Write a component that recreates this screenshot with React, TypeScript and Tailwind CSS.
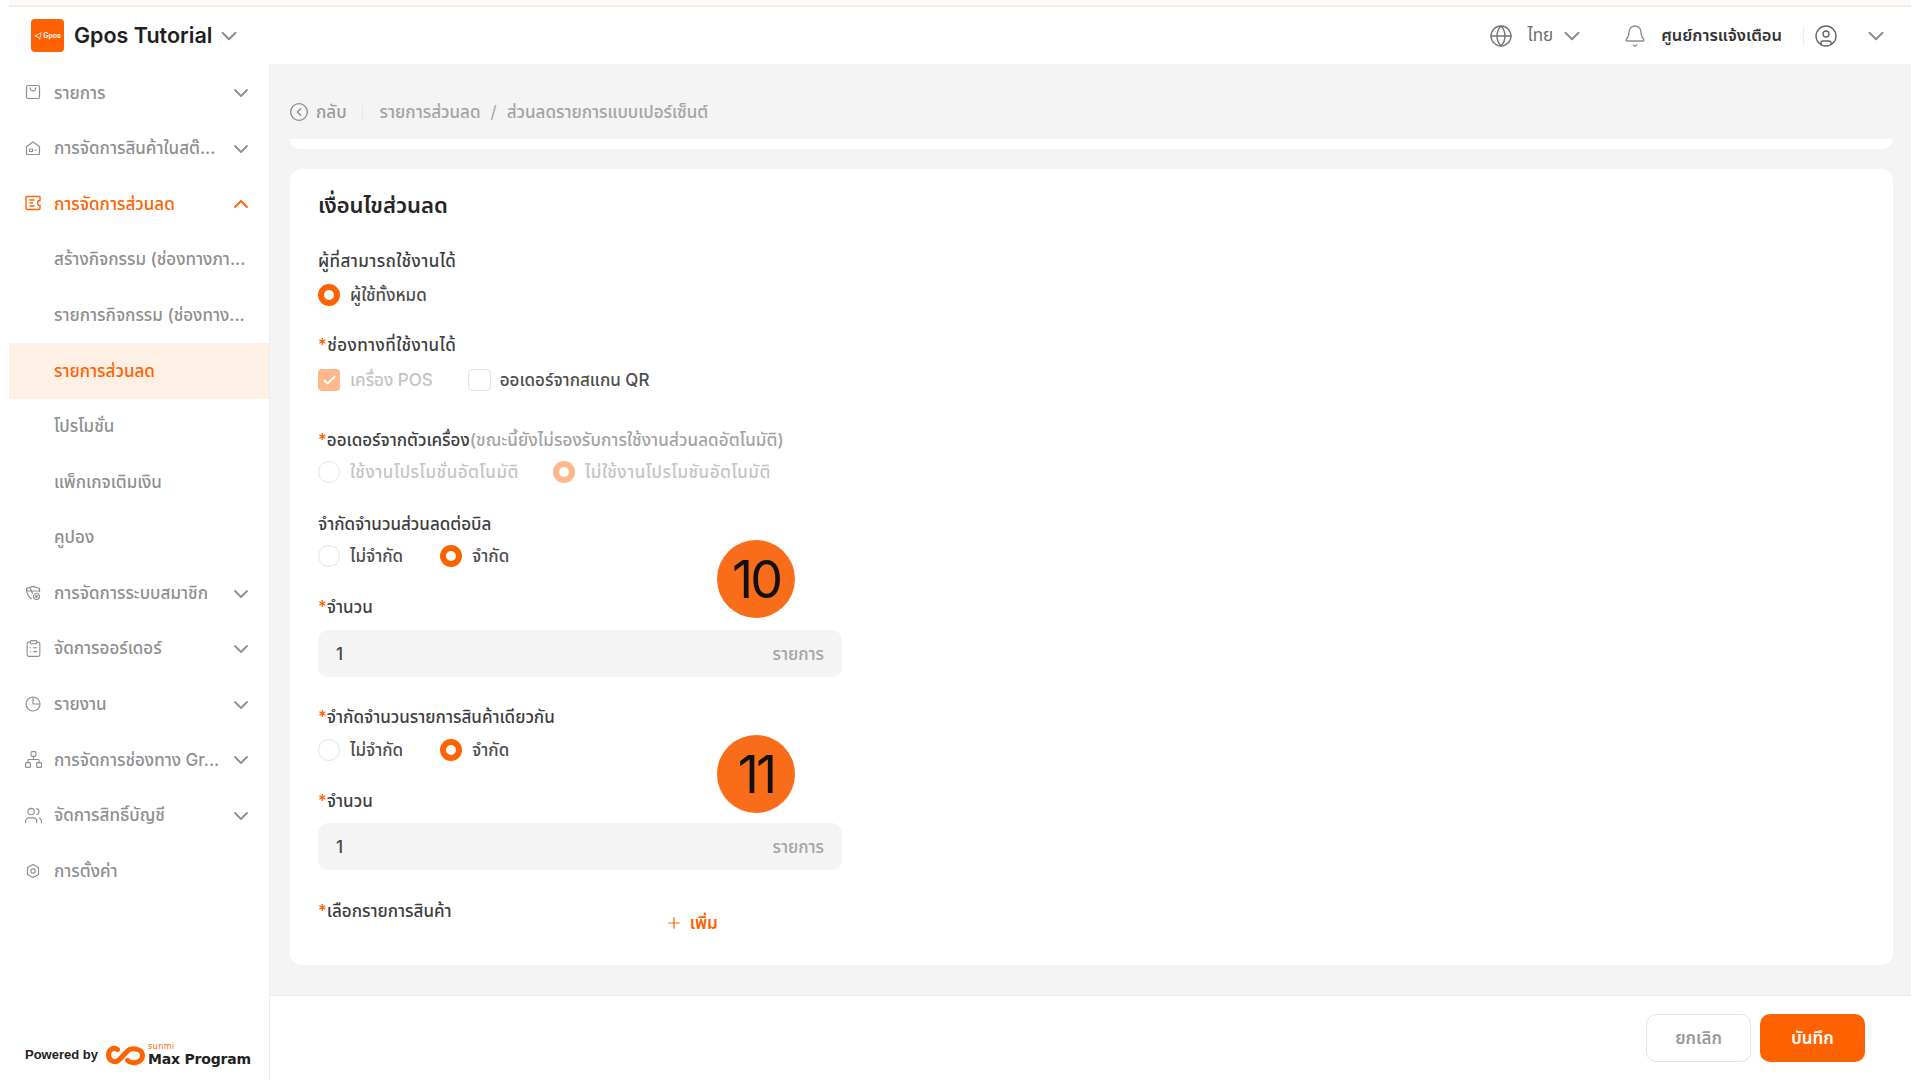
import { Bell, Check, ChevronDown, ChevronUp, CircleChevronLeft, CircleUser, ClipboardList, Globe, Network, Plus, Users } from 'lucide-react';
import type { ReactNode } from 'react';

const ORANGE = '#ff6200';

const iconClass = 'w-[16px] h-[16px] shrink-0 -mt-[2px]';
const lucideIconClass = 'w-[19px] h-[19px] shrink-0 -mx-[1.5px] -mt-[2px]';

function BagIcon() {
  return (
    <svg viewBox="0 0 16 16" fill="none" stroke="currentColor" strokeWidth="1.2" className={iconClass}>
      <rect x="1.5" y="1.5" width="13" height="13" rx="1.5" />
      <path d="M5 3.5c.4 2.4 1.5 3.4 3 3.4s2.6-1 3-3.4" />
    </svg>
  );
}

function StoreIcon() {
  return (
    <svg viewBox="0 0 16 16" fill="none" stroke="currentColor" strokeWidth="1.2" className={iconClass}>
      <path d="M1.5 6.5 8 2l6.5 4.5v7a1 1 0 0 1-1 1h-11a1 1 0 0 1-1-1z" />
      <path d="M4.5 9h3v2.5h-3zM9.5 10h2" />
    </svg>
  );
}

function TicketIcon() {
  return (
    <svg viewBox="0 0 16 16" fill="none" stroke="currentColor" strokeWidth="1.4" className={iconClass}>
      <path d="M2 1.5h12a1 1 0 0 1 1 1v3a2.5 2.5 0 0 0 0 5v3a1 1 0 0 1-1 1H2a1 1 0 0 1-1-1v-11a1 1 0 0 1 1-1z" />
      <path d="M4.5 5h5M4.5 8h3.500M4.500 11h5" />
    </svg>
  );
}

function MemberIcon() {
  return (
    <svg viewBox="0 0 16 16" fill="none" stroke="currentColor" strokeWidth="1.2" className={iconClass}>
      <path d="M7 14C3.500 12 1.500 9 1.500 3.500L8 1.500l6.500 2V7" />
      <path d="M1.800 6h12M5 2.500 6.500 6l1 3" />
      <circle cx="11.500" cy="11.500" r="3" />
      <circle cx="11.500" cy="11.500" r="0.800" />
    </svg>
  );
}

function ReportIcon() {
  return (
    <svg viewBox="0 0 16 16" fill="none" stroke="currentColor" strokeWidth="1.2" className={iconClass}>
      <circle cx="8" cy="8" r="7" />
      <path d="M8 1v7h7" />
    </svg>
  );
}

function SettingIcon() {
  return (
    <svg viewBox="0 0 16 16" fill="none" stroke="currentColor" strokeWidth="1.2" className={iconClass}>
      <path d="M8 1.500 13.500 4.500v7L8 14.500l-5.500-3v-7z" />
      <circle cx="8" cy="8" r="2.200" />
    </svg>
  );
}

const menu: { label: string; icon: ReactNode; open?: boolean; active?: boolean; chevron?: boolean }[] = [
  { label: 'รายการ', icon: <BagIcon />, chevron: true },
  { label: 'การจัดการสินค้าในสต๊...', icon: <StoreIcon />, chevron: true },
  { label: 'การจัดการส่วนลด', icon: <TicketIcon />, chevron: true, open: true },
];

const subMenu = [
  { label: 'สร้างกิจกรรม (ช่องทางภา...' },
  { label: 'รายการกิจกรรม (ช่องทาง...' },
  { label: 'รายการส่วนลด', active: true },
  { label: 'โปรโมชั่น' },
  { label: 'แพ็กเกจเติมเงิน' },
  { label: 'คูปอง' },
];

const menuBottom: { label: string; icon: ReactNode; chevron?: boolean }[] = [
  { label: 'การจัดการระบบสมาชิก', icon: <MemberIcon />, chevron: true },
  { label: 'จัดการออร์เดอร์', icon: <ClipboardList className={lucideIconClass} strokeWidth={1.4} />, chevron: true },
  { label: 'รายงาน', icon: <ReportIcon />, chevron: true },
  { label: 'การจัดการช่องทาง Gr...', icon: <Network className={lucideIconClass} strokeWidth={1.4} />, chevron: true },
  { label: 'จัดการสิทธิ์บัญชี', icon: <Users className={lucideIconClass} strokeWidth={1.4} />, chevron: true },
  { label: 'การตั้งค่า', icon: <SettingIcon /> },
];

function MenuRow({ label, icon, open, chevron }: { label: string; icon: ReactNode; open?: boolean; chevron?: boolean }) {
  return (
    <div className={`h-[55.6px] flex items-center pl-[16px] pr-[16px] text-[17px] font-medium ${open ? 'text-[#ff6200]' : 'text-[#8f8f8f]'}`}>
      {icon}
      <span className="ml-[13px] flex-1 whitespace-nowrap">{label}</span>
      {chevron && (open ? <ChevronUp className="w-[24px] h-[24px]" strokeWidth={1.8} /> : <ChevronDown className="w-[24px] h-[24px]" strokeWidth={1.8} />)}
    </div>
  );
}

function Sidebar() {
  return (
    <aside className="w-[261px] shrink-0 bg-white border-r border-[#eeeeee] flex flex-col">
      <div className="h-[1.5px]" />
      {menu.map((item) => (
        <MenuRow key={item.label} {...item} />
      ))}
      {subMenu.map((item) => (
        <div
          key={item.label}
          className={`h-[55.6px] flex items-center pl-[45px] text-[17px] font-medium whitespace-nowrap ${
            item.active ? 'bg-[#fff0e6] text-[#ff6200]' : 'text-[#8f8f8f]'
          }`}
        >
          {item.label}
        </div>
      ))}
      {menuBottom.map((item) => (
        <MenuRow key={item.label} {...item} />
      ))}
      <div className="mt-auto h-[52px] flex items-center pl-[16px] pt-[1px]">
        <span className="text-[13px] font-bold text-[#222222] font-['Liberation_Sans',sans-serif]">Powered by</span>
        <svg viewBox="0 0 40 26" className="w-[41px] h-[26px] ml-[7px]" fill="none" stroke={ORANGE} strokeWidth="5">
          <path d="M12 7.500C8.500 5 3 7 3 13c0 6 6.500 8.500 10.500 5L22 9c3.500-3.500 15-3 15 4.500S26 22.500 22 18.500" strokeLinecap="round" />
        </svg>
        <div className="flex flex-col ml-[2px] font-['DejaVu_Sans',sans-serif] leading-none">
          <span className="text-[8px] text-[#ff6200] tracking-[0.5px] h-[9px]">sunmi</span>
          <span className="text-[14px] font-bold text-[#222222] tracking-[-0.2px]">Max Program</span>
        </div>
      </div>
    </aside>
  );
}

function Header() {
  return (
    <header className="h-[57px] shrink-0 bg-white flex items-center pl-[22px] text-[#8c8c8c]">
      <div className="w-[33px] h-[33px] rounded-[4px] bg-[#ff6200] flex items-center justify-center">
        <svg viewBox="0 0 10 10" className="w-[8px] h-[8px] mr-[1px]" fill="none" stroke="#ffffff" strokeWidth="1">
          <path d="M1 5 9 1 7 9 5 6z" />
        </svg>
        <span className="text-[7px] font-semibold text-white leading-none">Gpos</span>
      </div>
      <span className="ml-[10px] text-[21.500px] font-semibold text-[#1f1f1f]">Gpos Tutorial</span>
      <ChevronDown className="ml-[4px] w-[26px] h-[26px]" strokeWidth={1.8} />
      <div className="flex-1" />
      <Globe className="w-[24px] h-[24px] text-[#757575]" strokeWidth={1.4} />
      <span className="ml-[15px] text-[17px] text-[#6b6b6b]">ไทย</span>
      <ChevronDown className="ml-[6px] w-[26px] h-[26px]" strokeWidth={1.8} />
      <Bell className="ml-[38px] w-[24px] h-[24px] text-[#8c8c8c]" strokeWidth={1.3} />
      <span className="ml-[14px] text-[16.500px] font-semibold text-[#333333]">ศูนย์การแจ้งเตือน</span>
      <div className="ml-[21px] w-px h-[20px] bg-[#eeeeee]" />
      <CircleUser className="ml-[10px] w-[24px] h-[24px] text-[#666666]" strokeWidth={1.4} />
      <ChevronDown className="ml-[25px] mr-[22px] w-[26px] h-[26px]" strokeWidth={1.8} />
    </header>
  );
}

function Radio({ checked, disabled, label }: { checked?: boolean; disabled?: boolean; label: string }) {
  let ring = 'border border-[#e3e3e3] bg-white';
  if (checked) ring = disabled ? 'border-[6px] border-[#ffb78c] bg-white' : 'border-[6px] border-[#ff6200] bg-white';
  return (
    <div className="flex items-center">
      <span className={`w-[22px] h-[22px] rounded-full ${ring}`} />
      <span className={`ml-[10px] pt-[2px] text-[17px] font-medium whitespace-nowrap ${disabled ? 'text-[#c4c4c4] tracking-[0.5px]' : 'text-[#4d4d4d]'}`}>{label}</span>
    </div>
  );
}

function Label({ required, wide, children }: { required?: boolean; wide?: boolean; children: ReactNode }) {
  return (
    <div className={`h-[24px] pt-[2px] flex items-center text-[17px] font-medium text-[#3d3d3d] whitespace-nowrap ${wide ? 'tracking-[0.4px]' : ''}`}>
      {required && <span className="text-[#ff6200]">*</span>}
      {children}
    </div>
  );
}

function QtyInput() {
  return (
    <div className="w-[524px] h-[47px] rounded-[10px] bg-[#f4f4f4] flex items-center justify-between px-[18px] pt-[2px] text-[17px] font-medium">
      <span className="text-[#444444]">1</span>
      <span className="text-[#a3a3a3]">รายการ</span>
    </div>
  );
}

function NumberBadge({ n, top }: { n: string; top: string }) {
  return (
    <div className={`absolute left-[427px] ${top} w-[78px] h-[78px] rounded-full bg-[#f96d1a] flex items-center justify-center pt-[1px] text-[52px] text-[#111111] font-['Inter',sans-serif] tracking-[-3px] leading-none`}>
      {n}
    </div>
  );
}

function DiscountForm() {
  return (
    <section className="relative mt-[20px] mr-[18px] h-[796px] rounded-[12px] bg-white pl-[28px] pt-[22px]">
      <h2 className="h-[28px] flex items-center text-[22px] font-semibold text-[#262626]">เงื่อนไขส่วนลด</h2>

      <div className="mt-[30px]">
        <Label wide>ผู้ที่สามารถใช้งานได้</Label>
      </div>
      <div className="mt-[10px] h-[24px] flex items-center">
        <Radio checked label="ผู้ใช้ทั้งหมด" />
      </div>

      <div className="mt-[26px]">
        <Label required wide>ช่องทางที่ใช้งานได้</Label>
      </div>
      <div className="mt-[11px] h-[24px] flex items-center">
        <span className="w-[22px] h-[22px] rounded-[4px] bg-[#ffb78c] flex items-center justify-center">
          <Check className="w-[15px] h-[15px] text-white" strokeWidth={3} />
        </span>
        <span className="ml-[10px] pt-[2px] text-[17px] font-medium text-[#c4c4c4]">เครื่อง POS</span>
        <span className="ml-[35px] w-[23px] h-[22px] rounded-[4px] border border-[#e3e3e3]" />
        <span className="ml-[9px] pt-[2px] text-[17px] font-medium text-[#4d4d4d]">ออเดอร์จากสแกน QR</span>
      </div>

      <div className="mt-[36px]">
        <Label required>
          ออเดอร์จากตัวเครื่อง<span className="text-[#a3a3a3] tracking-[0.1px]">(ขณะนี้ยังไม่รองรับการใช้งานส่วนลดอัตโนมัติ)</span>
        </Label>
      </div>
      <div className="mt-[8px] h-[24px] flex items-center gap-[34px]">
        <Radio disabled label="ใช้งานโปรโมชั่นอัตโนมัติ" />
        <Radio checked disabled label="ไม่ใช้งานโปรโมชันอัตโนมัติ" />
      </div>

      <div className="mt-[28px]">
        <Label>จำกัดจำนวนส่วนลดต่อบิล</Label>
      </div>
      <div className="mt-[8px] h-[24px] flex items-center gap-[37px]">
        <Radio label="ไม่จำกัด" />
        <Radio checked label="จำกัด" />
      </div>

      <div className="mt-[27px]">
        <Label required>จำนวน</Label>
      </div>
      <div className="mt-[11px]">
        <QtyInput />
      </div>

      <div className="mt-[28px]">
        <Label required>จำกัดจำนวนรายการสินค้าเดียวกัน</Label>
      </div>
      <div className="mt-[9px] h-[24px] flex items-center gap-[37px]">
        <Radio label="ไม่จำกัด" />
        <Radio checked label="จำกัด" />
      </div>

      <div className="mt-[27px]">
        <Label required>จำนวน</Label>
      </div>
      <div className="mt-[10px]">
        <QtyInput />
      </div>

      <div className="mt-[29px] flex items-start">
        <Label required>เลือกรายการสินค้า</Label>
        <div className="ml-[213px] mt-[10px] flex items-center text-[17px] font-semibold text-[#ff6200]">
          <Plus className="w-[18px] h-[18px]" strokeWidth={1.6} />
          <span className="ml-[7px] pt-[2px]">เพิ่ม</span>
        </div>
      </div>

      <NumberBadge n="10" top="top-[371px]" />
      <NumberBadge n="11" top="top-[566px]" />
    </section>
  );
}

export default function App() {
  return (
    <div className="w-[1920px] h-[1080px] overflow-hidden bg-white px-[9px] flex flex-col font-['Inter','Noto_Sans','Noto_Sans_Thai',sans-serif]">
      <div className="h-[7px] shrink-0 bg-[#fffafa] border-b-2 border-[#fbe8e4]" />
      <Header />
      <div className="flex-1 flex min-h-0">
        <Sidebar />
        <main className="flex-1 flex flex-col min-w-0 bg-[#f4f4f4]">
          <div className="flex-1 pl-[20px] min-h-0">
            <div className="h-[75px] pt-[22px] flex items-center text-[17px] text-[#a3a3a3]">
              <CircleChevronLeft className="w-[20px] h-[20px] text-[#8c8c8c] -mt-[1px] -ml-[1px]" strokeWidth={1.6} />
              <span className="ml-[7px] text-[#999999] font-medium">กลับ</span>
              <div className="ml-[15px] w-px h-[14px] bg-[#e5e5e5]" />
              <span className="ml-[17px] font-medium">รายการส่วนลด</span>
              <span className="mx-[10px]">/</span>
              <span className="font-medium">ส่วนลดรายการแบบเปอร์เซ็นต์</span>
            </div>
            <div className="h-[10px] mr-[18px] rounded-b-[12px] bg-white" />
            <DiscountForm />
          </div>
          <footer className="h-[85px] shrink-0 bg-white border-t border-[#e8e8e8] flex items-center justify-end pr-[46px] gap-[9px]">
            <button className="w-[105px] h-[48px] rounded-[10px] border border-[#e3e3e3] bg-white pt-[2px] text-[17px] font-semibold text-[#999999]">ยกเลิก</button>
            <button className="w-[105px] h-[48px] rounded-[10px] bg-[#ff6200] pt-[2px] text-[17px] font-semibold text-white">บันทึก</button>
          </footer>
        </main>
      </div>
    </div>
  );
}
